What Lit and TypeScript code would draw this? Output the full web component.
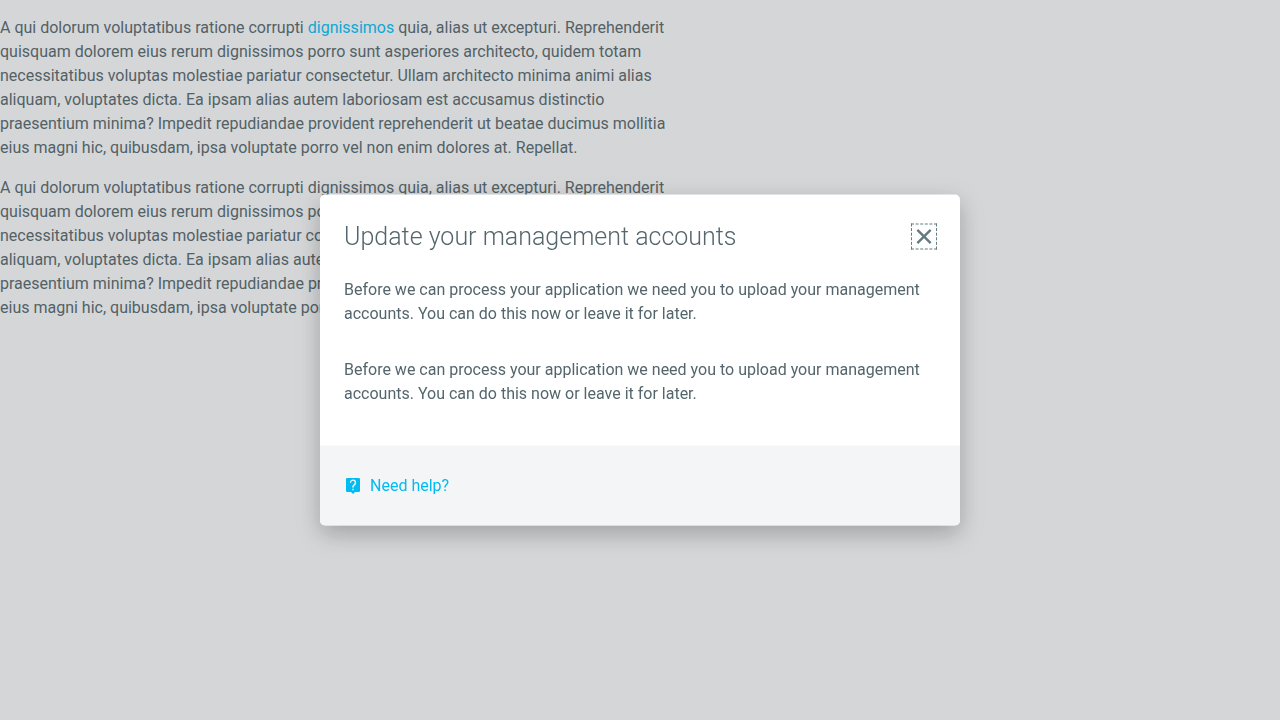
import { LitElement, html, css } from "lit";
import { customElement } from "lit/decorators.js";

@customElement("app-root")
export class AppRoot extends LitElement {
  static styles = css`
    :host {
      display: block;
      min-height: 100vh;
      background: #f3f5f7;
      color: #54666c;
      font: 400 16px/24px Roboto, sans-serif;
    }
    * { box-sizing: border-box; }
    p { margin: 0; }
    .page {
      display: flex;
      flex-direction: column;
      gap: 16px;
      max-width: 672px;
      padding: 16px 0;
    }
    a { color: #00bcf2; text-decoration: none; }
    .overlay {
      position: fixed;
      inset: 0;
      background: rgba(76, 76, 76, 0.18);
    }
    .modal {
      position: absolute;
      top: 50%;
      left: 50%;
      transform: translate(-50%, -50%);
      width: 50%;
      min-width: 320px;
      border-radius: 5px;
      overflow: hidden;
      background: #fff;
      box-shadow: 0 8px 24px rgba(0, 0, 0, 0.25);
    }
    .head {
      display: flex;
      align-items: center;
      justify-content: space-between;
      padding: 24px 24px 0;
    }
    h1 { margin: 0; font-size: 25px; line-height: 36px; font-weight: 300; }
    .close {
      display: grid;
      width: 24px;
      height: 24px;
      padding: 0;
      border: 0;
      background: none;
      color: #657b82;
      outline: 1px dashed #657b82;
    }
    .body {
      display: flex;
      flex-direction: column;
      gap: 32px;
      padding: 23px 24px 40px;
    }
    .foot { padding: 28px 24px; background: #f3f5f7; }
    .help { display: inline-flex; align-items: center; gap: 8px; vertical-align: top; }
    svg { display: block; fill: currentColor; }
  `;

  private filler = html`quia, alias ut excepturi. Reprehenderit quisquam dolorem eius rerum dignissimos porro sunt asperiores architecto, quidem totam necessitatibus voluptas molestiae pariatur consectetur. Ullam architecto minima animi alias aliquam, voluptates dicta. Ea ipsam alias autem laboriosam est accusamus distinctio praesentium minima? Impedit repudiandae provident reprehenderit ut beatae ducimus mollitia eius magni hic, quibusdam, ipsa voluptate porro vel non enim dolores at. Repellat.`;

  private notice = html`<p>Before we can process your application we need you to upload your management accounts. You can do this now or leave it for later.</p>`;

  render() {
    return html`
      <main class="page">
        <p>A qui dolorum voluptatibus ratione corrupti <a href="#">dignissimos</a> ${this.filler}</p>
        <p>A qui dolorum voluptatibus ratione corrupti dignissimos ${this.filler}</p>
      </main>
      <div class="overlay">
        <section class="modal" role="dialog" aria-modal="true" aria-labelledby="title">
          <header class="head">
            <h1 id="title">Update your management accounts</h1>
            <button class="close" type="button" aria-label="Close">
              <svg width="24" height="24" viewBox="0 0 24 24"><path d="M19.5 6.2 17.8 4.5 12 10.3 6.2 4.5 4.5 6.2 10.3 12 4.5 17.8 6.2 19.5 12 13.7 17.8 19.5 19.5 17.8 13.7 12z"/></svg>
            </button>
          </header>
          <div class="body">${this.notice}${this.notice}</div>
          <footer class="foot">
            <a class="help" href="#help">
              <svg width="18" height="18" viewBox="0 0 18 18"><path fill-rule="evenodd" d="M3.200 1.500h11.600q1.200 0 1.200 1.200v11.600q0 1.200-1.200 1.200H11l-2 2-2-2H3.200q-1.200 0-1.200-1.200V2.700q0-1.200 1.200-1.200zM5.800 6.200h1.400C7.200 5 8 4.300 9 4.300s1.700.700 1.700 1.700c0 .900-.400 1.400-1.200 2.100C8.500 9 8.200 9.700 8.200 11h1.500c0-1 .300-1.400 1.100-2.100.900-.800 1.400-1.600 1.400-2.900C12.200 4.200 10.900 3 9 3S5.800 4.300 5.800 6.200zM8.200 12.300v1.500h1.500v-1.500z"/></svg>
              <span>Need help?</span>
            </a>
          </footer>
        </section>
      </div>`;
  }
}
